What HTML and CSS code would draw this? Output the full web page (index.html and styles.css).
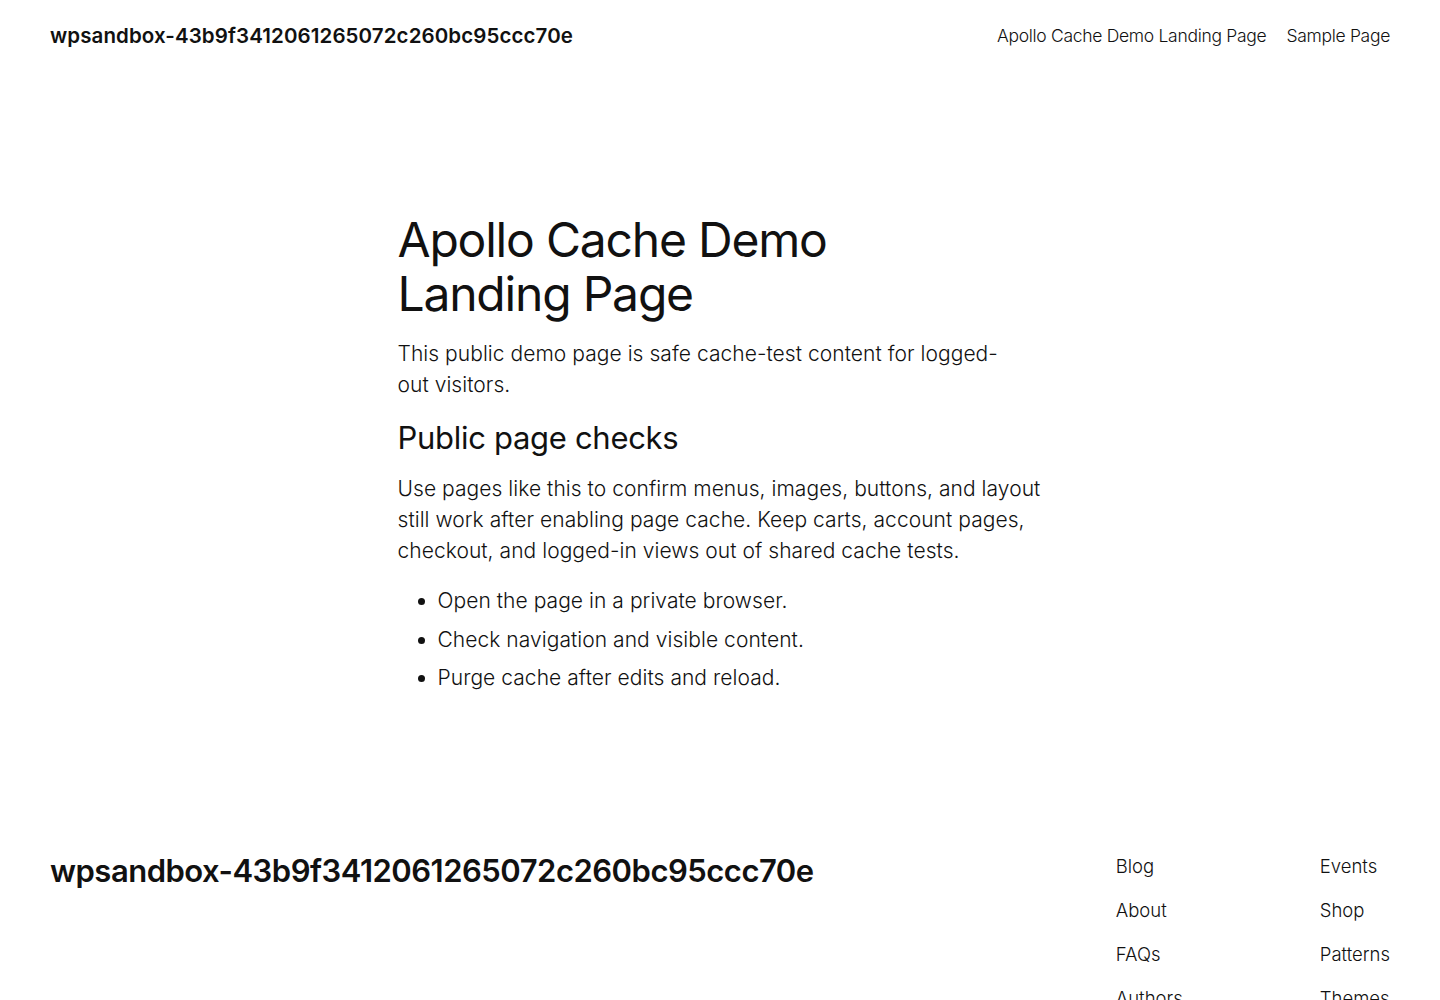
FILE: index.html
```html
<!DOCTYPE html>
<html lang="en">
<head>
<meta charset="utf-8">
<title>Apollo Cache Demo Landing Page</title>
<link rel="stylesheet" href="styles.css">
</head>
<body>
<header class="site-header">
  <a class="site-title" href="#">wpsandbox-43b9f3412061265072c260bc95ccc70e</a>
  <nav class="header-nav">
    <a href="#">Apollo Cache Demo Landing Page</a>
    <a href="#">Sample Page</a>
  </nav>
</header>
<main class="content">
  <h1 class="page-title">Apollo Cache Demo Landing Page</h1>
  <p class="lead">This public demo page is safe cache-test content for logged-out visitors.</p>
  <h2 class="section-title">Public page checks</h2>
  <p class="body-text">Use pages like this to confirm menus, images, buttons, and layout still work after enabling page cache. Keep carts, account pages, checkout, and logged-in views out of shared cache tests.</p>
  <ul class="checks">
    <li>Open the page in a private browser.</li>
    <li>Check navigation and visible content.</li>
    <li>Purge cache after edits and reload.</li>
  </ul>
</main>
<footer class="site-footer">
  <a class="footer-title" href="#">wpsandbox-43b9f3412061265072c260bc95ccc70e</a>
  <nav class="footer-nav">
    <div class="footer-col">
      <a href="#">Blog</a>
      <a href="#">About</a>
      <a href="#">FAQs</a>
      <a href="#">Authors</a>
    </div>
    <div class="footer-col">
      <a href="#">Events</a>
      <a href="#">Shop</a>
      <a href="#">Patterns</a>
      <a href="#">Themes</a>
    </div>
  </nav>
</footer>
</body>
</html>
```
FILE: styles.css
```css
* { box-sizing: border-box; }
html, body { margin: 0; padding: 0; background: #fff; }
body {
  font-family: Inter, "Noto Sans", sans-serif;
  color: #111111;
  font-weight: 300;
  overflow: hidden;
}
a { color: inherit; text-decoration: none; }

.site-header {
  height: 70px;
  padding: 0 50px;
  display: flex;
  align-items: center;
  justify-content: space-between;
}
.site-title {
  font-size: 20.5px;
  font-weight: 600;
  letter-spacing: 0.1px;
  padding-top: 1px;
}
.header-nav {
  display: flex;
  gap: 20px;
  font-size: 17.5px;
  letter-spacing: -0.3px;
}

.content {
  width: 645px;
  margin: 0 auto;
  padding-top: 143px;
}
.page-title {
  margin: 0;
  font-size: 48px;
  line-height: 54px;
  font-weight: 400;
  letter-spacing: -1.2px;
  text-wrap: balance;
}
.lead, .body-text {
  font-size: 21px;
  line-height: 31px;
  letter-spacing: 0.05px;
  margin: 17px 0 0;
  text-wrap: pretty;
}
.section-title {
  margin: 20px 0 0;
  font-size: 31px;
  line-height: 36px;
  font-weight: 400;
  letter-spacing: -0.3px;
}
.checks {
  margin: 19px 0 0;
  padding-left: 40px;
  font-size: 21px;
  line-height: 31px;
  letter-spacing: 0.05px;
}
.checks li { margin-bottom: 7.5px; }

.site-footer {
  margin-top: 160px;
  padding: 0 50px;
  display: flex;
  justify-content: space-between;
  align-items: flex-start;
}
.footer-title {
  font-size: 31px;
  line-height: 36px;
  font-weight: 600;
  letter-spacing: -0.5px;
}
.footer-nav {
  display: grid;
  grid-template-columns: 204px auto;
  font-size: 18.5px;
  letter-spacing: 0;
}
.footer-col {
  display: flex;
  flex-direction: column;
  gap: 17.5px;
}
.footer-col a { line-height: 26.5px; }
```
